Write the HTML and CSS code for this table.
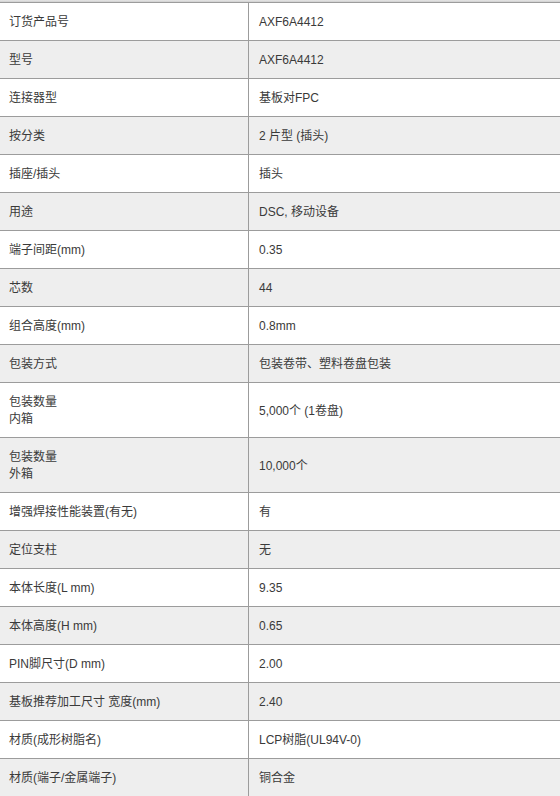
FILE: index.html
```html
<!DOCTYPE html>
<html lang="zh">
<head>
<meta charset="utf-8">
<link rel="stylesheet" href="styles.css">
</head>
<body>
<div class="spec">
  <div class="row"><div class="k">订货产品号</div><div class="v">AXF6A4412</div></div>
  <div class="row"><div class="k">型号</div><div class="v">AXF6A4412</div></div>
  <div class="row"><div class="k">连接器型</div><div class="v">基板对FPC</div></div>
  <div class="row"><div class="k">按分类</div><div class="v">2 片型 (插头)</div></div>
  <div class="row"><div class="k">插座/插头</div><div class="v">插头</div></div>
  <div class="row"><div class="k">用途</div><div class="v">DSC, 移动设备</div></div>
  <div class="row"><div class="k">端子间距(mm)</div><div class="v">0.35</div></div>
  <div class="row"><div class="k">芯数</div><div class="v">44</div></div>
  <div class="row"><div class="k">组合高度(mm)</div><div class="v">0.8mm</div></div>
  <div class="row"><div class="k">包装方式</div><div class="v">包装卷带、塑料卷盘包装</div></div>
  <div class="row"><div class="k">包装数量<br>内箱</div><div class="v">5,000个 (1卷盘)</div></div>
  <div class="row"><div class="k">包装数量<br>外箱</div><div class="v">10,000个</div></div>
  <div class="row"><div class="k">增强焊接性能装置(有无)</div><div class="v">有</div></div>
  <div class="row"><div class="k">定位支柱</div><div class="v">无</div></div>
  <div class="row"><div class="k">本体长度(L mm)</div><div class="v">9.35</div></div>
  <div class="row"><div class="k">本体高度(H mm)</div><div class="v">0.65</div></div>
  <div class="row"><div class="k">PIN脚尺寸(D mm)</div><div class="v">2.00</div></div>
  <div class="row"><div class="k">基板推荐加工尺寸 宽度(mm)</div><div class="v">2.40</div></div>
  <div class="row"><div class="k">材质(成形树脂名)</div><div class="v">LCP树脂(UL94V-0)</div></div>
  <div class="row"><div class="k">材质(端子/金属端子)</div><div class="v">铜合金</div></div>
</div>
</body>
</html>
```
FILE: styles.css
```css
html, body {
  margin: 0;
  padding: 0;
  background: #fff;
}
body {
  font-family: "Liberation Sans", Arial, "Noto Sans CJK SC", sans-serif;
  font-size: 12px;
  color: #3a3a3a;
}
.spec {
  padding-top: 2px;
  background: linear-gradient(to bottom, #e6e6e6 0, #cfcfcf 2px);
}
.row {
  display: grid;
  grid-template-columns: 249px 1fr;
  border-top: 1px solid #9c9c9c;
  background: #fff;
  line-height: 17px;
}
.row:nth-child(even) {
  background: #eeeeee;
}
.k {
  border-right: 1px solid #9c9c9c;
  padding: 11px 8px 9px 9px;
}
.v {
  padding: 11px 8px 9px 10px;
  display: flex;
  align-items: center;
}
```
